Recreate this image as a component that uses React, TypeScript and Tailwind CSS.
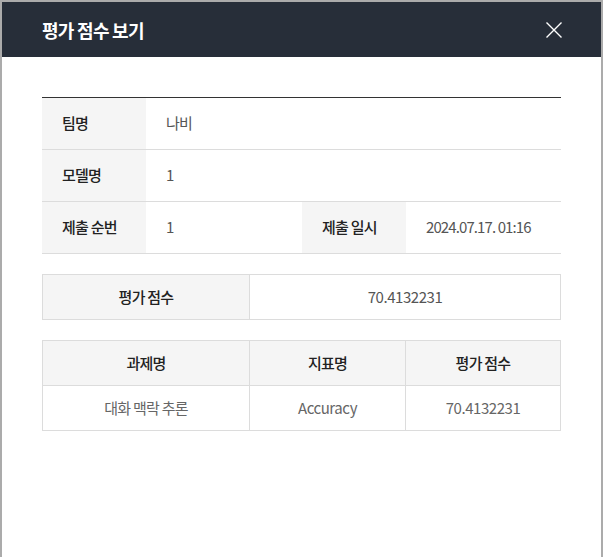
export default function App() {
  const font = { fontFamily: '"Noto Sans CJK KR", "Noto Sans", sans-serif' };
  return (
    <div
      className="w-[603px] h-[557px] overflow-hidden bg-[#ababab] pt-[2px] pl-[2px] pr-[2px]"
      style={font}
    >
      <div className="h-full w-[599px] bg-white flex flex-col">
        {/* 헤더 */}
        <div className="h-[55px] shrink-0 bg-[#272e39] flex items-center justify-between pl-[40px] pr-[39px]">
          <h1 className="text-[18px] font-bold text-white tracking-[-0.04em] leading-none">평가 점수 보기</h1>
          <button className="w-[16px] h-[16px] flex items-center justify-center">
            <svg width="16" height="16" viewBox="0 0 16 16" fill="none">
              <path d="M0.5 0.5L15.5 15.5M15.5 0.5L0.5 15.5" stroke="white" strokeWidth="1.4" />
            </svg>
          </button>
        </div>

        <div className="px-[40px] pt-[40px]">
          {/* 기본 정보 */}
          <div className="border-t border-[#333] text-[15px] tracking-[-0.05em]">
            <div className="grid grid-cols-[104px_1fr] h-[52px] border-b border-[#dcdcdc]">
              <div className="bg-[#f5f5f5] flex items-center pl-[20px] font-medium text-[#222]">팀명</div>
              <div className="flex items-center pl-[20px] text-[#555]">나비</div>
            </div>
            <div className="grid grid-cols-[104px_1fr] h-[52px] border-b border-[#dcdcdc]">
              <div className="bg-[#f5f5f5] flex items-center pl-[20px] font-medium text-[#222]">모델명</div>
              <div className="flex items-center pl-[20px] text-[#555]">1</div>
            </div>
            <div className="grid grid-cols-[104px_156px_104px_1fr] h-[52px] border-b border-[#dcdcdc]">
              <div className="bg-[#f5f5f5] flex items-center pl-[20px] font-medium text-[#222]">제출 순번</div>
              <div className="flex items-center pl-[20px] text-[#555]">1</div>
              <div className="bg-[#f5f5f5] flex items-center pl-[20px] font-medium text-[#222]">제출 일시</div>
              <div className="flex items-center pl-[20px] text-[#555] tracking-[-0.06em]">2024.07.17. 01:16</div>
            </div>
          </div>

          {/* 평가 점수 */}
          <div className="mt-[20px] border border-[#dcdcdc] grid grid-cols-[206px_1fr] h-[46px] text-[15px] tracking-[-0.05em]">
            <div className="bg-[#f5f5f5] flex items-center justify-center font-medium text-[#222]">평가 점수</div>
            <div className="border-l border-[#dcdcdc] flex items-center justify-center text-[#555] tracking-[-0.03em]">70.4132231</div>
          </div>

          {/* 과제별 점수 */}
          <div className="mt-[20px] border border-[#dcdcdc] text-[15px] tracking-[-0.05em]">
            <div className="grid grid-cols-[206px_156px_1fr] h-[45px] bg-[#f5f5f5] border-b border-[#dcdcdc] font-medium text-[#222]">
              <div className="flex items-center justify-center">과제명</div>
              <div className="flex items-center justify-center border-l border-[#dcdcdc]">지표명</div>
              <div className="flex items-center justify-center border-l border-[#dcdcdc]">평가 점수</div>
            </div>
            <div className="grid grid-cols-[206px_156px_1fr] h-[44px] text-[#666]">
              <div className="flex items-center justify-center">대화 맥락 추론</div>
              <div className="flex items-center justify-center border-l border-[#dcdcdc] tracking-[-0.03em]">Accuracy</div>
              <div className="flex items-center justify-center border-l border-[#dcdcdc] tracking-[-0.03em]">70.4132231</div>
            </div>
          </div>
        </div>
      </div>
    </div>
  );
}
